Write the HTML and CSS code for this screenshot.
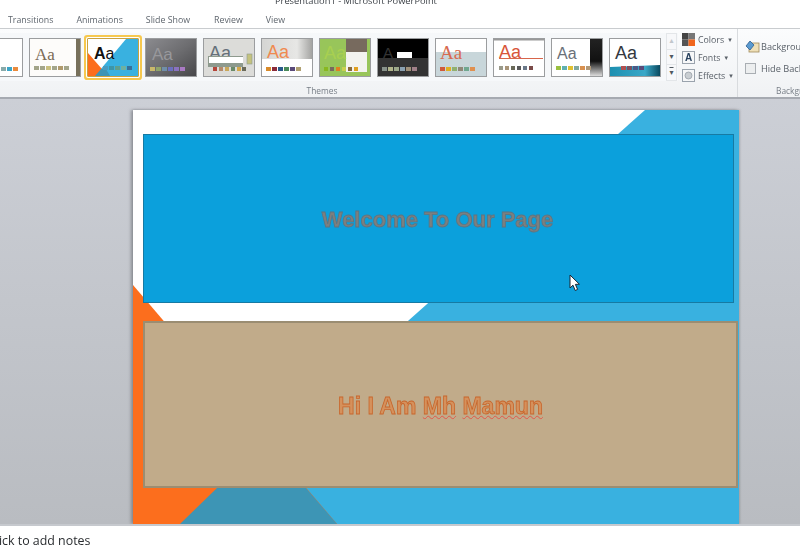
FILE: index.html
```html
<!DOCTYPE html>
<html lang="en">
<head>
<meta charset="utf-8">
<title>Presentation1 - Microsoft PowerPoint</title>
<link rel="stylesheet" href="styles.css">
</head>
<body>
<div class="app">
  <header class="titlebar">
    <div class="title">Presentation1 - Microsoft PowerPoint</div>
    <nav class="tabs">
      <span class="tab tab-a">Transitions</span>
      <span class="tab tab-b">Animations</span>
      <span class="tab tab-c">Slide Show</span>
      <span class="tab tab-d">Review</span>
      <span class="tab tab-e">View</span>
    </nav>
  </header>

  <section class="ribbon">
    <div class="themes">
      <div class="band">
        <div class="gallery">
          <div class="thumb"><svg viewBox="0 0 50 37"><rect width="50" height="37" fill="#fff"/><rect x="29" y="28" width="5" height="4" fill="#8aa"/><rect x="35" y="28" width="5" height="4" fill="#3aa5c8"/><rect x="41" y="28" width="5" height="4" fill="#ea8a3c"/></svg></div>
          <div class="thumb"><svg viewBox="0 0 50 37"><rect width="50" height="37" fill="#fdfcfa"/><rect x="46" width="4" height="37" fill="#77705a"/><text x="5" y="21" font-family="Liberation Serif" font-size="17" fill="#7a6a55">Aa</text><g fill="#a3a58a"><rect x="4" y="27" width="5" height="4"/><rect x="10" y="27" width="5" height="4"/><rect x="16" y="27" width="5" height="4" fill="#c9bf7e"/><rect x="22" y="27" width="5" height="4"/><rect x="28" y="27" width="5" height="4" fill="#b09a6c"/><rect x="34" y="27" width="5" height="4"/></g></svg></div>
          <div class="thumb selected"><svg viewBox="0 0 50 37"><rect width="50" height="37" fill="#fff"/><polygon points="38,0 50,0 50,37 7,37" fill="#39b1e0"/><polygon points="0,14 20,37 0,37" fill="#fc6e1d"/><polygon points="7,37 13,30 18,30 22,37" fill="#3d95b5"/><text x="6" y="20" font-family="Liberation Sans" font-weight="700" font-size="16" fill="#111">A<tspan font-weight="400">a</tspan></text><g fill="#4a9cc0"><rect x="15" y="27" width="5" height="4"/><rect x="21" y="27" width="5" height="4" fill="#3d95a8"/><rect x="27" y="27" width="5" height="4" fill="#5f9f8e"/><rect x="33" y="27" width="5" height="4" fill="#6fb0a0"/><rect x="39" y="27" width="5" height="4" fill="#36709a"/></g></svg></div>
          <div class="thumb"><svg viewBox="0 0 50 37"><defs><linearGradient id="gr1" x1="0" y1="0" x2="1" y2="1"><stop offset="0" stop-color="#8b8b8f"/><stop offset=".5" stop-color="#6d6d70"/><stop offset="1" stop-color="#47474a"/></linearGradient></defs><rect width="50" height="37" fill="url(#gr1)"/><text x="6" y="21" font-family="Liberation Sans" font-size="17" fill="#98989c">Aa</text><rect x="4" y="28" width="5" height="4" fill="#c9b96a"/><rect x="10" y="28" width="5" height="4" fill="#8fa46a"/><rect x="16" y="28" width="5" height="4" fill="#6f8ea8"/><rect x="22" y="28" width="5" height="4" fill="#6b6fc0"/><rect x="28" y="28" width="5" height="4" fill="#8a72c0"/><rect x="34" y="28" width="5" height="4" fill="#a97ac4"/></svg></div>
          <div class="thumb"><svg viewBox="0 0 50 37"><rect width="50" height="37" fill="#dcdcd9"/><text x="5" y="20" font-family="Liberation Sans" font-size="18" fill="#66707a">Aa</text><rect x="4" y="17" width="35" height="11" fill="#8e9a8e"/><rect x="5" y="18" width="34" height="6" fill="#fff"/><rect x="43" y="15" width="5" height="10" fill="#c4c27e" stroke="#8e9a8e" stroke-width=".6"/><rect x="9" y="28" width="4" height="4" fill="#b5453a"/><rect x="15" y="28" width="4" height="4" fill="#b58a6a"/><rect x="21" y="28" width="4" height="4" fill="#c9a85a"/><rect x="27" y="28" width="4" height="4" fill="#6a8a6a"/><rect x="33" y="28" width="4" height="4" fill="#d4a84a"/><rect x="38" y="28" width="4" height="4" fill="#6a6a5a"/></svg></div>
          <div class="thumb"><svg viewBox="0 0 50 37"><defs><linearGradient id="gr2" x1="0" y1="0" x2="1" y2="0"><stop offset="0" stop-color="#d5d5d3"/><stop offset=".7" stop-color="#e7e7e5"/><stop offset="1" stop-color="#a4a4a2"/></linearGradient></defs><rect width="50" height="20" fill="url(#gr2)"/><rect y="20" width="50" height="17" fill="#fff"/><text x="5" y="19" font-family="Liberation Sans" font-size="18" fill="#f08a50">Aa</text><rect x="4" y="28" width="5" height="4" fill="#d88a2a"/><rect x="10" y="28" width="5" height="4" fill="#8a2a3a"/><rect x="16" y="28" width="5" height="4" fill="#2a5a8a"/><rect x="22" y="28" width="5" height="4" fill="#4a8a5a"/><rect x="28" y="28" width="5" height="4" fill="#5a4a7a"/><rect x="34" y="28" width="5" height="4" fill="#b0a070"/></svg></div>
          <div class="thumb"><svg viewBox="0 0 50 37"><rect width="50" height="37" fill="#98c55a"/><rect x="26" width="21" height="13" fill="#776a5e"/><rect x="26" y="13" width="21" height="20" fill="#f3f3ef"/><text x="4" y="20" font-family="Liberation Sans" font-size="18" fill="#a8d050">Aa</text><rect x="4" y="28" width="4" height="4" fill="#88b820"/><rect x="10" y="28" width="4" height="4" fill="#776a5e"/><rect x="16" y="28" width="4" height="4" fill="#e08020"/><rect x="22" y="28" width="4" height="4" fill="#c8d050"/><rect x="28" y="28" width="4" height="4" fill="#8a6a3a"/><rect x="34" y="28" width="4" height="4" fill="#e0a020"/></svg></div>
          <div class="thumb"><svg viewBox="0 0 50 37"><rect width="50" height="19" fill="#000"/><rect y="19" width="50" height="18" fill="#333"/><text x="5" y="19" font-family="Liberation Sans" font-size="15" fill="#333">A</text><rect x="19" y="13" width="15" height="6" fill="#fff"/><rect x="4" y="28" width="5" height="4" fill="#87918a"/><rect x="10" y="28" width="5" height="4" fill="#b0b48a"/><rect x="16" y="28" width="5" height="4" fill="#9ca88a"/><rect x="22" y="28" width="5" height="4" fill="#8aa0b0"/><rect x="28" y="28" width="5" height="4" fill="#a09078"/><rect x="34" y="28" width="5" height="4" fill="#a08088"/></svg></div>
          <div class="thumb"><svg viewBox="0 0 50 37"><rect width="50" height="13" fill="#fff"/><rect y="13" width="50" height="24" fill="#c8d6da"/><text x="4" y="20" font-family="Liberation Serif" font-size="19" fill="#d86a50">Aa</text><rect x="4" y="28" width="5" height="4" fill="#d05a3a"/><rect x="10" y="28" width="5" height="4" fill="#e0b020"/><rect x="16" y="28" width="5" height="4" fill="#90b070"/><rect x="22" y="28" width="5" height="4" fill="#908878"/><rect x="28" y="28" width="5" height="4" fill="#70a890"/><rect x="34" y="28" width="5" height="4" fill="#e09050"/></svg></div>
          <div class="thumb"><svg viewBox="0 0 50 37"><rect width="50" height="37" fill="#fff"/><rect width="50" height="1.5" fill="#999"/><rect x="5" y="19" width="44" height="1" fill="#d8654a"/><text x="5" y="19" font-family="Liberation Sans" font-size="18" fill="#d8563a">Aa</text><rect x="5" y="27" width="4" height="4" fill="#9a9a8a"/><rect x="11" y="27" width="4" height="4" fill="#a89478"/><rect x="17" y="27" width="4" height="4" fill="#6a6a5a"/><rect x="23" y="27" width="4" height="4" fill="#5a5a5a"/><rect x="29" y="27" width="4" height="4" fill="#6a7888"/><rect x="35" y="27" width="4" height="4" fill="#7a4a48"/></svg></div>
          <div class="thumb"><svg viewBox="0 0 50 37"><defs><linearGradient id="gr3" x1="0" y1="0" x2="0" y2="1"><stop offset="0" stop-color="#222"/><stop offset=".6" stop-color="#111"/><stop offset="1" stop-color="#ddd"/></linearGradient></defs><rect width="50" height="37" fill="#fff"/><rect x="38" width="12" height="37" fill="url(#gr3)"/><text x="5" y="20" font-family="Liberation Sans" font-size="16" fill="#6a7078">Aa</text><rect x="4" y="27" width="5" height="4" fill="#9ac040"/><rect x="10" y="27" width="5" height="4" fill="#60b0b0"/><rect x="16" y="27" width="5" height="4" fill="#e0c030"/><rect x="22" y="27" width="5" height="4" fill="#80a8a0"/><rect x="28" y="27" width="5" height="4" fill="#d89050"/><rect x="34" y="27" width="5" height="4" fill="#b09878"/></svg></div>
          <div class="thumb"><svg viewBox="0 0 50 37"><defs><linearGradient id="gr4" x1="0" y1="0" x2="1" y2="0"><stop offset="0" stop-color="#1d8fb0"/><stop offset=".7" stop-color="#3aa8c8"/><stop offset="1" stop-color="#0a4a60"/></linearGradient></defs><rect width="50" height="37" fill="#fff"/><polygon points="0,28 50,26 50,37 0,37" fill="url(#gr4)"/><text x="5" y="20" font-family="Liberation Sans" font-size="18" fill="#33393f">Aa</text><rect x="11" y="27" width="5" height="4" fill="#b05050"/><rect x="17" y="27" width="5" height="4" fill="#7a5060"/><rect x="23" y="27" width="5" height="4" fill="#4a5a88"/><rect x="29" y="27" width="5" height="4" fill="#5a4a78"/></svg></div>
        </div>
        <div class="scroller">
          <span class="scroll-btn scroll-up">▴</span>
          <span class="scroll-btn">▾</span>
          <span class="scroll-btn scroll-more">▾</span>
        </div>
      </div>
      <div class="group-label themes-label">Themes</div>
    </div>

    <div class="options">
      <div class="option">
        <svg class="opt-icon" viewBox="0 0 13 13"><rect x="0" y="0" width="6.5" height="6.5" fill="#444"/><rect x="6.5" y="0" width="6.5" height="6.5" fill="#777"/><rect x="0" y="6.5" width="6.5" height="6.5" fill="#555"/><rect x="6.5" y="6.5" width="6.5" height="6.5" fill="#f0651d"/></svg>
        <span>Colors</span><i class="caret">▾</i>
      </div>
      <div class="option">
        <span class="font-icon">A</span>
        <span>Fonts</span><i class="caret">▾</i>
      </div>
      <div class="option">
        <svg class="opt-icon" viewBox="0 0 13 13"><rect x=".5" y=".5" width="12" height="12" fill="#f6f7f8" stroke="#9aa3ad"/><circle cx="6.5" cy="6.5" r="3.5" fill="#c9ced2" stroke="#8f979f" stroke-width=".7"/></svg>
        <span>Effects</span><i class="caret">▾</i>
      </div>
    </div>

    <div class="background">
      <div class="bg-rows">
        <div class="bg-row">
          <svg class="bg-icon" viewBox="0 0 15 13"><rect x="4" y="3" width="10" height="9" fill="#efe0b8" stroke="#a08a5a" stroke-width=".8"/><polygon points="1,6 5,1 9,5 5,10" fill="#5a9ad0" stroke="#2f5f90" stroke-width=".8"/></svg>
          <span>Background Styles</span>
        </div>
        <div class="bg-row">
          <span class="checkbox"></span>
          <span>Hide Background Graphics</span>
        </div>
      </div>
      <div class="group-label bg-label">Background</div>
    </div>
  </section>

  <main class="workspace">
    <div class="slide">
      <svg class="slide-art" viewBox="133 110 606 414" preserveAspectRatio="none">
        <polygon points="645,110 739,110 739,524 180,524" fill="#39b1e0"/>
        <polygon points="133,285 337,524 133,524" fill="#fc6e1d"/>
        <polygon points="217,488 306,488 337,524 180,524" fill="#3d95b5"/>
      </svg>
      <div class="box box-welcome"><span class="welcome-text">Welcome To Our Page</span></div>
      <div class="box box-hi"><span class="hi-text">Hi I Am <span class="misspelt">Mh</span> <span class="misspelt">Mamun</span></span></div>
      <svg class="pointer" viewBox="0 0 12 18"><path d="M1 1 L1 14 L4 11.2 L6.2 16.5 L8.6 15.4 L6.4 10.4 L10.4 10.2 Z" fill="#fff" stroke="#1c2430" stroke-width="1"/></svg>
    </div>
  </main>

  <footer class="notes"><span class="notes-text">Click to add notes</span></footer>
</div>
</body>
</html>
```
FILE: styles.css
```css
* { box-sizing: border-box; }
html, body { margin: 0; padding: 0; width: 800px; height: 554px; overflow: hidden; }
body { font-family: "Open Sans", "Noto Sans", sans-serif; background: #fff; }

.app { width: 800px; height: 554px; display: flex; flex-direction: column; overflow: hidden; }

.titlebar { height: 29px; flex: none; background: #fff; border-bottom: 1px solid #c9cccf; overflow: hidden; }
.title { height: 13px; margin-top: -6px; margin-bottom: 6px; padding-left: 275px; font-size: 9.3px; line-height: 13px; color: #3a3f45; white-space: nowrap; filter: blur(.3px); }
.tabs { display: flex; height: 14px; align-items: center; font-size: 8.8px; line-height: 14px; color: #5f666e; filter: blur(.3px); }
.tab-a { margin-left: 8px; }
.tab-b { margin-left: 23px; }
.tab-c { margin-left: 23px; }
.tab-d { margin-left: 24px; }
.tab-e { margin-left: 23px; }

.ribbon { height: 70px; flex: none; display: flex; background: linear-gradient(#fbfcfd, #f0f2f4); border-bottom: 2px solid #a6aab1; overflow: hidden; }

.themes { width: 678px; flex: none; display: flex; flex-direction: column; padding-top: 4px; }
.band { display: flex; height: 48px; background: #f6f8fa; }
.gallery { display: flex; gap: 6px; margin-left: -29px; padding-top: 5px; width: 695px; flex: none; }
.thumb { width: 52px; height: 39px; flex: none; border: 1px solid #9b9d9f; background: #fff; }
.thumb svg { display: block; width: 50px; height: 37px; }
.thumb.selected { box-shadow: 0 0 0 1px #fff, 0 0 0 3px #f6c84f; border-color: #c9a23f; border-radius: 1px; }

.scroller { width: 11px; flex: none; display: flex; flex-direction: column; border: 1px solid #e3e6e9; background: #f7f8fa; }
.scroll-btn { flex: 1; display: flex; align-items: center; justify-content: center; font-size: 8px; line-height: 1; color: #4f5860; border-bottom: 1px solid #e3e6e9; font-family: "DejaVu Sans", sans-serif; }
.scroll-up { color: #c2c7cc; }
.scroll-more { border-bottom: 0; text-decoration: overline; }

.group-label { font-size: 8.4px; line-height: 12px; color: #777e86; text-align: center; filter: blur(.3px); }
.themes-label { padding-top: 4px; margin-left: -34px; }

.options { width: 60px; flex: none; padding: 4px 0 0 4px; display: flex; flex-direction: column; gap: 5px; border-right: 1px solid #d8dbde; font-size: 8.8px; color: #5a6169; }
.option { display: flex; align-items: center; gap: 3px; height: 13px; white-space: nowrap; filter: blur(.25px); }
.opt-icon { width: 13px; height: 13px; flex: none; }
.font-icon { width: 13px; height: 13px; flex: none; display: flex; align-items: center; justify-content: center; border: 1px solid #9aa3ad; background: #f6f7f8; font: 700 10px "Liberation Sans", sans-serif; color: #29425f; }
.caret { font-style: normal; font-size: 7px; font-family: "DejaVu Sans", sans-serif; margin-left: 1px; }

.background { flex: 1; min-width: 0; display: flex; flex-direction: column; overflow: hidden; }
.bg-rows { display: flex; flex-direction: column; height: 58px; padding: 10px 0 0 7px; gap: 8px; font-size: 9.2px; color: #5a6169; white-space: nowrap; }
.bg-row { display: flex; align-items: center; gap: 1px; height: 14px; filter: blur(.25px); }
.bg-icon { width: 15px; height: 13px; flex: none; }
.checkbox { width: 11px; height: 11px; margin-right: 4px; flex: none; border: 1px solid #a9aeb3; background: #eceeef; }
.bg-label { text-align: left; padding-left: 38px; margin-top: -1px; white-space: nowrap; }

.workspace { flex: 1; min-height: 0; padding: 11px 0 0 133px; background: linear-gradient(#cccfd6, #b9bcc1); overflow: hidden; }

.slide { position: relative; width: 606px; height: 414px; background: #fff; box-shadow: -2px 0 3px rgba(90, 92, 98, .55), 1px 0 2px rgba(90, 92, 98, .3); }
.slide-art { position: absolute; left: 0; top: 0; width: 606px; height: 414px; display: block; }

.box { position: absolute; display: flex; align-items: center; justify-content: center; font-family: "Liberation Sans", sans-serif; font-weight: 700; }
.box-welcome { left: 10px; top: 24px; width: 591px; height: 169px; background: #0ba0dc; border: 1px solid #177aa3; font-size: 22px; padding-top: 3px; padding-right: 2px; }
.box-hi { left: 10px; top: 211px; width: 595px; height: 167px; background: #c1ab8a; border: 2px solid #9b8d72; font-size: 23px; padding-top: 3px; }
.welcome-text { color: #7d7f7e; -webkit-text-stroke: .8px #5f7480; filter: blur(.4px); }
.hi-text { color: #d5915c; -webkit-text-stroke: .8px #c8662c; filter: blur(.4px); }
.misspelt { text-decoration: underline wavy #e2574a 1px; text-underline-offset: 1px; }

.pointer { position: absolute; left: 436px; top: 164px; width: 12px; height: 18px; }

.notes { height: 30px; flex: none; background: #fff; border-top: 2px solid #c6c9ce; padding-top: 6px; overflow: hidden; }
.notes-text { display: block; margin-left: -12px; font-size: 12.4px; line-height: 18px; color: #2a2d30; white-space: nowrap; filter: blur(.25px); }
```
